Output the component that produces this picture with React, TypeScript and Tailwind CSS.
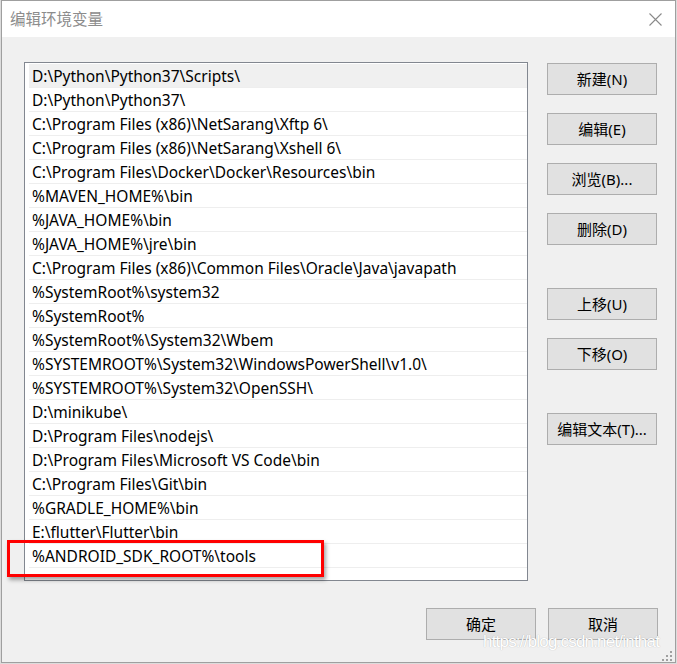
import React from "react";

const paths = [
  "D:\\Python\\Python37\\Scripts\\",
  "D:\\Python\\Python37\\",
  "C:\\Program Files (x86)\\NetSarang\\Xftp 6\\",
  "C:\\Program Files (x86)\\NetSarang\\Xshell 6\\",
  "C:\\Program Files\\Docker\\Docker\\Resources\\bin",
  "%MAVEN_HOME%\\bin",
  "%JAVA_HOME%\\bin",
  "%JAVA_HOME%\\jre\\bin",
  "C:\\Program Files (x86)\\Common Files\\Oracle\\Java\\javapath",
  "%SystemRoot%\\system32",
  "%SystemRoot%",
  "%SystemRoot%\\System32\\Wbem",
  "%SYSTEMROOT%\\System32\\WindowsPowerShell\\v1.0\\",
  "%SYSTEMROOT%\\System32\\OpenSSH\\",
  "D:\\minikube\\",
  "D:\\Program Files\\nodejs\\",
  "D:\\Program Files\\Microsoft VS Code\\bin",
  "C:\\Program Files\\Git\\bin",
  "%GRADLE_HOME%\\bin",
  "E:\\flutter\\Flutter\\bin",
  "%ANDROID_SDK_ROOT%\\tools",
];

const font = "font-['Segoe_UI','Noto_Sans','Noto_Sans_CJK_SC',sans-serif]";

function Btn({ label, className = "" }: { label: string; className?: string }) {
  return (
    <button
      className={`w-[110px] h-[32px] pt-px bg-[#e1e1e1] border border-[#adadad] text-[15px] text-black leading-none ${font} ${className}`}
    >
      {label}
    </button>
  );
}

export default function App() {
  return (
    <div className="relative w-[677px] h-[664px] bg-[#dcdcdc] flex">
      <div className="ml-px w-[675px] h-[663px] border border-[#9f9f9f] bg-[#f0f0f0] flex flex-col">
        {/* title bar */}
        <div className="h-[36px] bg-white flex items-center justify-between pl-[8px] pr-[13px]">
          <span className={`text-[15.5px] pt-px text-[#8c8c8c] ${font}`}>编辑环境变量</span>
          <svg width="13" height="13" viewBox="0 0 13 13">
            <path d="M0.5 0.5L12.5 12.5M12.5 0.5L0.5 12.5" stroke="#8a8a8a" strokeWidth="1.1" />
          </svg>
        </div>

        {/* body */}
        <div className="flex pl-[22px] pt-[25px]">
          <div className="w-[504px] h-[519px] border border-[#828790] bg-white pl-[4px] pt-px">
            {paths.map((p, i) => (
              <div
                key={p}
                className={`h-[24px] flex items-center pl-[3px] pt-[3px] border-b border-[#eeeeee] text-[15.5px] text-black whitespace-nowrap ${font} ${
                  i === 0 ? "bg-[#f0f0f0]" : ""
                }`}
              >
                {p}
              </div>
            ))}
          </div>

          <div className="ml-[19px] pt-px flex flex-col">
            <Btn label="新建(N)" />
            <Btn label="编辑(E)" className="mt-[18px]" />
            <Btn label="浏览(B)..." className="mt-[18px]" />
            <Btn label="删除(D)" className="mt-[18px]" />
            <Btn label="上移(U)" className="mt-[43px]" />
            <Btn label="下移(O)" className="mt-[18px]" />
            <Btn label="编辑文本(T)..." className="mt-[43px]" />
          </div>
        </div>

        {/* footer */}
        <div className="flex justify-end gap-[12px] pt-[27px] pr-[17px]">
          <Btn label="确定" />
          <Btn label="取消" />
        </div>
      </div>

      {/* annotation box */}
      <div className="absolute left-[7px] top-[540px] w-[317px] h-[37px] border-[3px] border-[#ff0000] shadow-[2px_3px_4px_rgba(0,0,0,0.35)]" />

      {/* watermark */}
      <div className="absolute left-[483px] top-[629px] whitespace-nowrap text-[17px] tracking-[-0.8px] text-white font-['Liberation_Sans',sans-serif] [text-shadow:0_0_1px_rgba(0,0,0,0.3)]">
        https://blog.csdn.net/inthat
      </div>

      {/* resize grip */}
      <svg className="absolute left-[662px] top-[651px]" width="11" height="11" viewBox="0 0 11 11">
        <rect x="8" y="0" width="2" height="2" fill="#a0a0a0" />
        <rect x="4" y="4" width="2" height="2" fill="#a0a0a0" />
        <rect x="8" y="4" width="2" height="2" fill="#a0a0a0" />
        <rect x="0" y="8" width="2" height="2" fill="#a0a0a0" />
        <rect x="4" y="8" width="2" height="2" fill="#a0a0a0" />
        <rect x="8" y="8" width="2" height="2" fill="#a0a0a0" />
      </svg>
    </div>
  );
}
